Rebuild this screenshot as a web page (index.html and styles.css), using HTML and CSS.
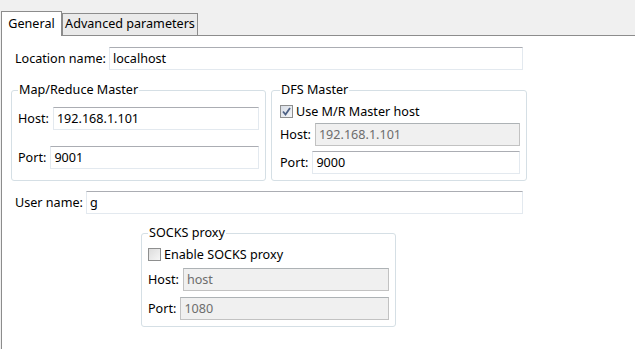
FILE: index.html
```html
<!DOCTYPE html>
<html lang="en">
<head>
  <meta charset="UTF-8" />
  <title>Hadoop location</title>
  <link rel="stylesheet" href="styles.css">
</head>
<body>
  <div class="tab-strip">
    <div class="tab active">General</div>
    <div class="tab">Advanced parameters</div>
  </div>

  <div class="panel">
    <div class="form">
      <div class="row wide">
        <label class="lbl">Location name:</label>
        <input class="field" type="text" value="localhost" />
      </div>

      <div class="groups">
        <fieldset class="group mr">
          <legend>Map/Reduce Master</legend>
          <div class="row">
            <label class="lbl">Host:</label>
            <input class="field" type="text" value="192.168.1.101" />
          </div>
          <div class="row gap-big">
            <label class="lbl">Port:</label>
            <input class="field" type="text" value="9001" />
          </div>
        </fieldset>

        <fieldset class="group dfs">
          <legend>DFS Master</legend>
          <div class="check-row">
            <span class="box checked">
              <svg width="9" height="9" viewBox="0 0 9 9"><path d="M1 4.5 L3.5 7.5 L8 1" fill="none" stroke="#4d6185" stroke-width="1.8"/></svg>
            </span>
            <span>Use M/R Master host</span>
          </div>
          <div class="row">
            <label class="lbl">Host:</label>
            <input class="field" type="text" value="192.168.1.101" disabled />
          </div>
          <div class="row">
            <label class="lbl">Port:</label>
            <input class="field" type="text" value="9000" />
          </div>
        </fieldset>
      </div>

      <div class="row wide user">
        <label class="lbl">User name:</label>
        <input class="field" type="text" value="g" />
      </div>

      <fieldset class="group socks">
        <legend>SOCKS proxy</legend>
        <div class="check-row">
          <span class="box"></span>
          <span>Enable SOCKS proxy</span>
        </div>
        <div class="row">
          <label class="lbl">Host:</label>
          <input class="field" type="text" value="host" disabled />
        </div>
        <div class="row">
          <label class="lbl">Port:</label>
          <input class="field" type="text" value="1080" disabled />
        </div>
      </fieldset>
    </div>
  </div>
</body>
</html>
```

FILE: styles.css
```css
body {
  margin: 0;
  padding: 0;
  font-family: 'Noto Sans', 'Open Sans', sans-serif;
  font-size: 12.6px;
  color: #000;
  background-color: #f0f0f0;
  overflow: hidden;
}
.tab-strip {
  display: flex;
  align-items: flex-end;
  height: 35px;
  padding-left: 1px;
}
.tab {
  width: 136px;
  height: 22px;
  box-sizing: border-box;
  text-align: center;
  white-space: nowrap;
  line-height: 20px;
  border: 1px solid #8c8c8c;
  border-bottom: none;
  background-color: #eaeaea;
}
.tab.active {
  width: 61px;
  height: 25px;
  margin-bottom: -1px;
  line-height: 24px;
  background-color: #fff;
  position: relative;
  z-index: 1;
}
.panel {
  background-color: #fff;
  border-top: 1px solid #8c8c8c;
  border-left: 1px solid #8c8c8c;
  margin-left: 1px;
  height: 302px;
  padding: 11px 0 0 9px;
}
.form {
  width: 516px;
  display: flex;
  flex-direction: column;
}
.row {
  display: flex;
  align-items: center;
  gap: 4px;
}
.row.wide {
  padding: 0 4px;
  gap: 3px;
}
.lbl {
  white-space: nowrap;
}
.field {
  flex: 1;
  min-width: 0;
  height: 23px;
  box-sizing: border-box;
  margin: 0;
  padding: 0 3px;
  font-family: inherit;
  font-size: 12.6px;
  color: #000;
  background-color: #fff;
  border: 1px solid #e3e9ef;
  border-top-color: #abadb3;
  outline: none;
}
.field:disabled {
  color: #6d6d6d;
  background-color: #f0f0f0;
  border-color: #c2c2c2;
  border-top-color: #adb2b5;
}
.groups {
  display: flex;
  gap: 5px;
  margin-top: 12px;
}
.group {
  margin: 0;
  padding: 9px 6px 6px 6px;
  border: 1px solid #d5dfe5;
  border-radius: 3px;
  box-sizing: border-box;
}
.group legend {
  padding: 0 1px;
  line-height: 16px;
}
.group.mr {
  width: 255px;
}
.group.dfs {
  width: 256px;
  padding-left: 8px;
  padding-top: 5px;
}
.group.dfs .row {
  margin-top: 4px;
}
.group.dfs .row + .row {
  margin-top: 5px;
}
.row.gap-big {
  margin-top: 16px;
}
.check-row {
  display: flex;
  align-items: center;
  gap: 3px;
  height: 16px;
}
.box {
  width: 11px;
  height: 11px;
  border: 1px solid #8e8f8f;
  background: linear-gradient(135deg, #dcdcdc, #f6f6f6);
  display: flex;
  align-items: center;
  justify-content: center;
}
.box.checked {
  background: linear-gradient(135deg, #d8dde6, #f4f6f8);
}
.user {
  margin-top: 10px;
}
.socks {
  width: 255px;
  margin: 11px 0 0 130px;
  padding: 5px 6px 6px 6px;
}
.socks .row {
  margin-top: 6px;
}
```
